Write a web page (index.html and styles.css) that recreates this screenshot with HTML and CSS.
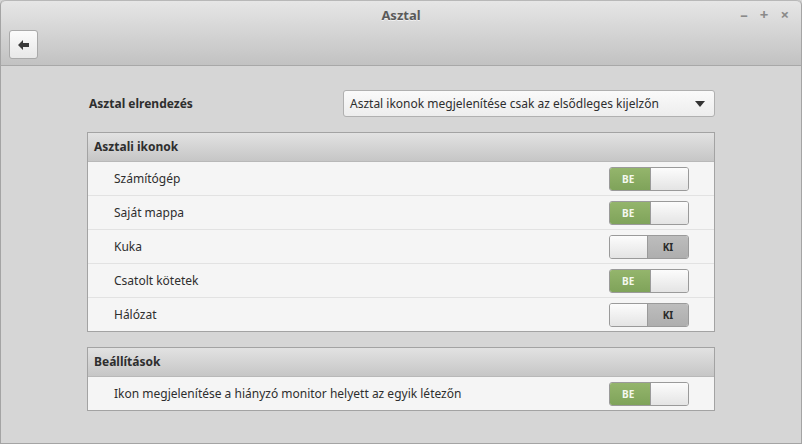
FILE: index.html
```html
<!DOCTYPE html>
<html lang="hu">
<head>
    <meta charset="UTF-8">
    <title>Asztal</title>
    <link rel="stylesheet" href="styles.css">
</head>
<body>
<div class="window">
    <!-- fejléc -->
    <div class="header">
        <div class="title">Asztal</div>
        <div class="controls">
            <span class="ctl">&#8211;</span>
            <span class="ctl">+</span>
            <span class="ctl">&#215;</span>
        </div>
        <button class="back">
            <svg width="12" height="10" viewBox="0 0 12 10"><path d="M0 5 L5 0 L5 3 L11 3 L11 7 L5 7 L5 10 Z" fill="#3a3a3a"/></svg>
        </button>
    </div>

    <div class="content">
        <div class="layout-row">
            <span class="layout-label">Asztal elrendezés</span>
            <div class="combo">
                <span>Asztal ikonok megjelenítése csak az elsődleges kijelzőn</span>
                <svg width="10" height="6" viewBox="0 0 10 6"><path d="M0 0 L10 0 L5 6 Z" fill="#333"/></svg>
            </div>
        </div>

        <div class="section">
            <div class="section-head">Asztali ikonok</div>
            <div class="row"><span>Számítógép</span><div class="switch on"><span class="state">BE</span><span class="knob"></span></div></div>
            <div class="row"><span>Saját mappa</span><div class="switch on"><span class="state">BE</span><span class="knob"></span></div></div>
            <div class="row"><span>Kuka</span><div class="switch off"><span class="knob"></span><span class="state">KI</span></div></div>
            <div class="row"><span>Csatolt kötetek</span><div class="switch on"><span class="state">BE</span><span class="knob"></span></div></div>
            <div class="row"><span>Hálózat</span><div class="switch off"><span class="knob"></span><span class="state">KI</span></div></div>
        </div>

        <div class="section">
            <div class="section-head">Beállítások</div>
            <div class="row"><span>Ikon megjelenítése a hiányzó monitor helyett az egyik létezőn</span><div class="switch on"><span class="state">BE</span><span class="knob"></span></div></div>
        </div>
    </div>
</div>
</body>
</html>
```

FILE: styles.css
```css
body {
    margin: 0;
    font-family: "Noto Sans", sans-serif;
    font-size: 12px;
    color: #2e2e2e;
    background: #d6d6d6;
}
.window {
    width: 802px;
    height: 444px;
    box-sizing: border-box;
    border: 1px solid #a4a4a4;
    border-top: none;
    border-radius: 5px 5px 0 0;
    background: #d6d6d6;
    overflow: hidden;
}
.header {
    position: relative;
    height: 66px;
    box-sizing: border-box;
    border-top: 1px solid #b8b8b8;
    border-bottom: 1px solid #a8a8a8;
    border-radius: 5px 5px 0 0;
    background: linear-gradient(#e6e6e6, #c2c2c2);
    padding: 29px 0 0 8px;
}
.title {
    position: absolute;
    top: 5px;
    left: 0;
    right: 0;
    text-align: center;
    font-weight: bold;
    font-size: 13px;
    color: #5a5a5a;
    text-shadow: 0 1px 0 rgba(255,255,255,0.6);
}
.controls {
    position: absolute;
    top: 3px;
    right: 12px;
    display: flex;
    gap: 12px;
    color: #8a8a8a;
    font-size: 15px;
    font-weight: bold;
}
.back {
    width: 29px;
    height: 29px;
    padding: 0;
    display: flex;
    align-items: center;
    justify-content: center;
    border: 1px solid #a9a9a9;
    border-radius: 3px;
    background: linear-gradient(#fbfbfb, #e8e8e8);
}
.content {
    padding: 24px 86px 0 86px;
}
.layout-row {
    display: flex;
    align-items: center;
    justify-content: space-between;
    height: 27px;
    margin-bottom: 15px;
}
.layout-label {
    font-weight: bold;
    padding-left: 2px;
}
.combo {
    width: 372px;
    height: 27px;
    box-sizing: border-box;
    display: flex;
    align-items: center;
    justify-content: space-between;
    padding: 0 9px 0 6px;
    border: 1px solid #b0b0b0;
    border-radius: 3px;
    background: linear-gradient(#fafafa, #ededed);
}
.section {
    border: 1px solid #a3a3a3;
    background: #f5f5f5;
    margin-bottom: 15px;
}
.section-head {
    height: 28px;
    line-height: 28px;
    padding-left: 6px;
    font-weight: bold;
    border-bottom: 1px solid #b8b8b8;
    background: linear-gradient(#e2e2e2, #c6c6c6);
}
.row {
    height: 33px;
    display: flex;
    align-items: center;
    justify-content: space-between;
    padding: 0 25px 0 26px;
    border-top: 1px solid #e2e2e2;
}
.section-head + .row {
    border-top: none;
}
.switch {
    width: 80px;
    height: 24px;
    box-sizing: border-box;
    display: flex;
    border: 1px solid #9a9a9a;
    border-radius: 3px;
    overflow: hidden;
    font-size: 10px;
    font-weight: bold;
}
.switch .state {
    width: 40px;
    display: flex;
    align-items: center;
    justify-content: center;
}
.switch.on .state {
    background: linear-gradient(#94b56c, #7fa35a);
    color: #f4f8ee;
    justify-content: flex-start;
    padding-left: 12px;
    box-sizing: border-box;
}
.switch.off .state {
    background: linear-gradient(#bdbdbd, #aeaeae);
    color: #2a2a2a;
}
.switch .knob {
    flex: 1;
    background: linear-gradient(#fcfcfc, #e4e4e4);
}
.switch.on .knob {
    border-left: 1px solid #9a9a9a;
}
.switch.off .knob {
    border-right: 1px solid #9a9a9a;
}
```
